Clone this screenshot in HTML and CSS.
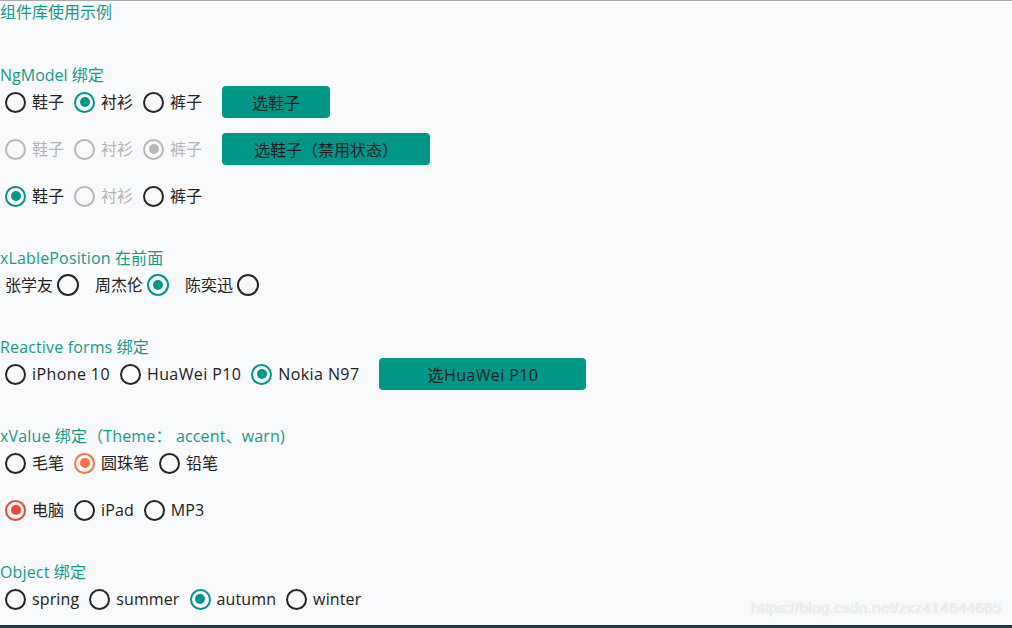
FILE: index.html
```html
<!DOCTYPE html>
<html lang="zh-CN">
<head>
<meta charset="utf-8">
<title>组件库使用示例</title>
<link rel="stylesheet" href="styles.css">
</head>
<body>
<div class="page">
  <div class="title">组件库使用示例</div>

  <section class="section">
    <div class="heading">NgModel 绑定</div>
    <div class="row">
      <label class="radio"><span class="circle"></span><span class="text">鞋子</span></label>
      <label class="radio"><span class="circle checked"></span><span class="text">衬衫</span></label>
      <label class="radio"><span class="circle"></span><span class="text">裤子</span></label>
      <button class="btn">选鞋子</button>
    </div>
    <div class="row">
      <label class="radio disabled"><span class="circle"></span><span class="text">鞋子</span></label>
      <label class="radio disabled"><span class="circle"></span><span class="text">衬衫</span></label>
      <label class="radio disabled"><span class="circle checked"></span><span class="text">裤子</span></label>
      <button class="btn btn-mid">选鞋子（禁用状态）</button>
    </div>
    <div class="row">
      <label class="radio"><span class="circle checked"></span><span class="text">鞋子</span></label>
      <label class="radio disabled"><span class="circle"></span><span class="text">衬衫</span></label>
      <label class="radio"><span class="circle"></span><span class="text">裤子</span></label>
    </div>
  </section>

  <section class="section">
    <div class="heading en-h">xLablePosition 在前面</div>
    <div class="row">
      <label class="radio before"><span class="text">张学友</span><span class="circle"></span></label>
      <label class="radio before"><span class="text">周杰伦</span><span class="circle checked"></span></label>
      <label class="radio before"><span class="text">陈奕迅</span><span class="circle"></span></label>
    </div>
  </section>

  <section class="section">
    <div class="heading en-h">Reactive forms 绑定</div>
    <div class="row">
      <label class="radio"><span class="circle"></span><span class="text en">iPhone 10</span></label>
      <label class="radio"><span class="circle"></span><span class="text en">HuaWei P10</span></label>
      <label class="radio"><span class="circle checked"></span><span class="text en">Nokia N97</span></label>
      <button class="btn btn-wide en">选HuaWei P10</button>
    </div>
  </section>

  <section class="section">
    <div class="heading en-h">xValue 绑定（Theme： accent、warn)</div>
    <div class="row">
      <label class="radio"><span class="circle"></span><span class="text">毛笔</span></label>
      <label class="radio accent"><span class="circle checked"></span><span class="text">圆珠笔</span></label>
      <label class="radio"><span class="circle"></span><span class="text">铅笔</span></label>
    </div>
    <div class="row">
      <label class="radio warn"><span class="circle checked"></span><span class="text">电脑</span></label>
      <label class="radio"><span class="circle"></span><span class="text en-s">iPad</span></label>
      <label class="radio"><span class="circle"></span><span class="text en-s">MP3</span></label>
    </div>
  </section>

  <section class="section">
    <div class="heading en-h">Object 绑定</div>
    <div class="row">
      <label class="radio"><span class="circle"></span><span class="text en-s">spring</span></label>
      <label class="radio"><span class="circle"></span><span class="text en-s">summer</span></label>
      <label class="radio"><span class="circle checked"></span><span class="text en-s">autumn</span></label>
      <label class="radio"><span class="circle"></span><span class="text en-s">winter</span></label>
    </div>
  </section>

  <div class="watermark">https://blog.csdn.net/zxz414644665</div>
</div>
</body>
</html>
```

FILE: styles.css
```css
* { box-sizing: border-box; }

html, body {
  margin: 0;
  padding: 0;
}

body {
  background: #f8f9fa;
  font-family: "Open Sans", "Noto Sans CJK SC", sans-serif;
  font-size: 16px;
  color: #222;
}

.page {
  position: relative;
  height: 628px;
  border-top: 1px solid #a9a9a9;
  border-bottom: 3px solid #2a363b;
  overflow: hidden;
  display: flex;
  flex-direction: column;
}

.title {
  height: 22px;
  line-height: 22px;
  color: #17998a;
  margin-bottom: 41px;
}

.section {
  display: flex;
  flex-direction: column;
  gap: 15px;
  margin-bottom: 35px;
}

.heading {
  height: 22px;
  line-height: 22px;
  color: #17998a;
  margin-bottom: -15px;
}

.en {
  letter-spacing: 0.4px;
}

.en-h {
  letter-spacing: 0.15px;
}

.en-s {
  letter-spacing: 0.12px;
}

.row {
  height: 32px;
  display: flex;
  align-items: center;
}

.radio {
  display: flex;
  align-items: center;
  padding: 0 5px;
  color: #222;
  line-height: 22px;
}

.radio .circle {
  position: relative;
  width: 21px;
  height: 21px;
  border: 2px solid #262626;
  border-radius: 50%;
  margin-right: 6px;
  flex: none;
}

.radio .circle.checked {
  border-color: #009688;
}

.radio .circle.checked::after {
  content: "";
  position: absolute;
  left: 3.5px;
  top: 3.5px;
  width: 10px;
  height: 10px;
  border-radius: 50%;
  background: #009688;
}

.radio.before {
  padding: 0 5px 0 5px;
  margin-right: 6px;
}

.radio.before .text {
  margin-right: 4px;
}

.radio.before .circle {
  width: 22px;
  height: 22px;
  margin-right: 0;
}

.radio.before .circle.checked::after {
  left: 4px;
  top: 4px;
}

.radio.disabled {
  color: #b5b5b5;
}

.radio.disabled .circle {
  border-color: #b8b8b8;
}

.radio.disabled .circle.checked::after {
  background: #b8b8b8;
}

.radio.accent .circle.checked {
  border-color: #ff7043;
}

.radio.accent .circle.checked::after {
  background: #ff7043;
}

.radio.warn .circle.checked {
  border-color: #f44336;
}

.radio.warn .circle.checked::after {
  background: #f44336;
}

.btn {
  margin-left: 15px;
  height: 32px;
  padding: 0 30px;
  border: none;
  border-radius: 4px;
  background: #009688;
  color: #1c1c1c;
  font-family: "Open Sans", "Noto Sans CJK SC", sans-serif;
  font-size: 16px;
}

.btn-mid {
  width: 208px;
  padding: 0;
}

.btn-wide {
  width: 207px;
  padding: 0;
}

.watermark {
  position: absolute;
  right: 10px;
  bottom: 8px;
  font-family: "Liberation Sans", sans-serif;
  font-size: 15.5px;
  color: #f2f2f2;
  text-shadow: 0 0 1px #c8c8c8;
  letter-spacing: 0.2px;
}
```
